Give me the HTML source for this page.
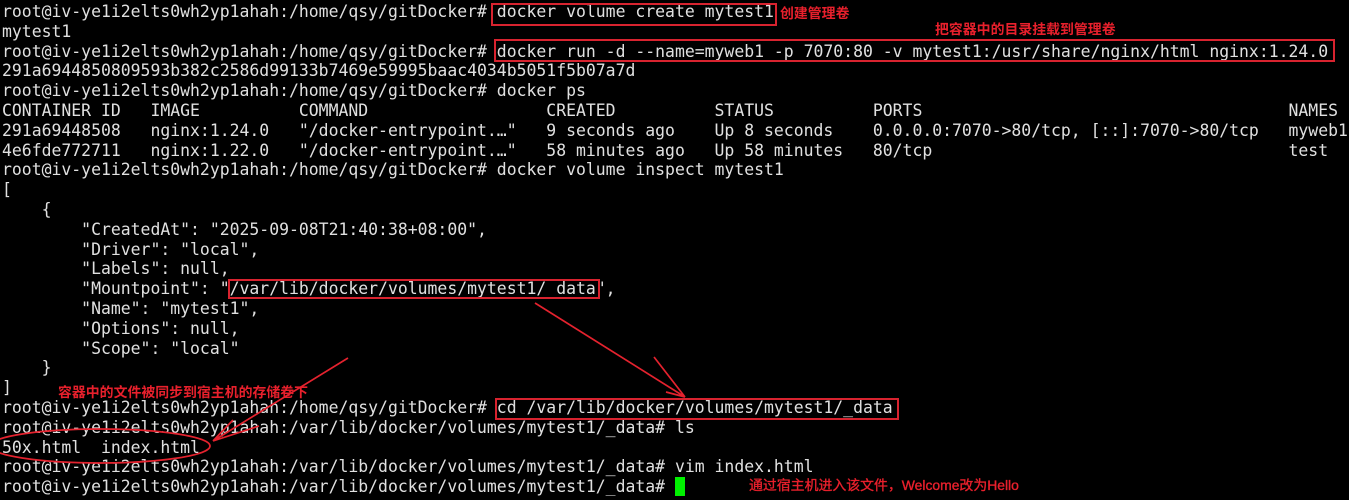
<!DOCTYPE html>
<html lang="zh">
<head>
<meta charset="utf-8">
<title>docker volume</title>
<style>
html,body{margin:0;padding:0;width:1349px;height:500px;overflow:hidden;background:#000;}
pre{position:absolute;left:2px;top:2px;margin:0;font-family:"DejaVu Sans Mono","Liberation Mono",monospace;font-size:16.45px;line-height:19.79px;color:#e0e0e0;filter:blur(.3px);white-space:pre;}
.box{position:absolute;border:2px solid #d8232f;box-sizing:border-box;}
.note{position:absolute;font-family:"Liberation Sans","Noto Sans CJK SC",sans-serif;font-size:13.9px;line-height:16px;color:#e8202c;font-weight:700;white-space:nowrap;filter:blur(.2px);}
#cursor{position:absolute;left:675px;top:477px;width:10px;height:19px;background:#00f000;}
svg{position:absolute;left:0;top:0;}
</style>
</head>
<body>
<pre>root@iv-ye1i2elts0wh2yp1ahah:/home/qsy/gitDocker# docker volume create mytest1
mytest1
root@iv-ye1i2elts0wh2yp1ahah:/home/qsy/gitDocker# docker run -d --name=myweb1 -p 7070:80 -v mytest1:/usr/share/nginx/html nginx:1.24.0
291a6944850809593b382c2586d99133b7469e59995baac4034b5051f5b07a7d
root@iv-ye1i2elts0wh2yp1ahah:/home/qsy/gitDocker# docker ps
CONTAINER ID   IMAGE          COMMAND                  CREATED          STATUS          PORTS                                     NAMES
291a69448508   nginx:1.24.0   "/docker-entrypoint.…"   9 seconds ago    Up 8 seconds    0.0.0.0:7070-&gt;80/tcp, [::]:7070-&gt;80/tcp   myweb1
4e6fde772711   nginx:1.22.0   "/docker-entrypoint.…"   58 minutes ago   Up 58 minutes   80/tcp                                    test
root@iv-ye1i2elts0wh2yp1ahah:/home/qsy/gitDocker# docker volume inspect mytest1
[
    {
        "CreatedAt": "2025-09-08T21:40:38+08:00",
        "Driver": "local",
        "Labels": null,
        "Mountpoint": "/var/lib/docker/volumes/mytest1/_data",
        "Name": "mytest1",
        "Options": null,
        "Scope": "local"
    }
]
root@iv-ye1i2elts0wh2yp1ahah:/home/qsy/gitDocker# cd /var/lib/docker/volumes/mytest1/_data
root@iv-ye1i2elts0wh2yp1ahah:/var/lib/docker/volumes/mytest1/_data# ls
50x.html  index.html
root@iv-ye1i2elts0wh2yp1ahah:/var/lib/docker/volumes/mytest1/_data# vim index.html
root@iv-ye1i2elts0wh2yp1ahah:/var/lib/docker/volumes/mytest1/_data# </pre>
<div id="cursor"></div>
<div class="box" style="left:491px;top:3px;width:286px;height:23px;"></div>
<div class="box" style="left:494px;top:39px;width:841px;height:23px;"></div>
<div class="box" style="left:228px;top:279px;width:372px;height:20px;"></div>
<div class="box" style="left:495px;top:398px;width:404px;height:22px;"></div>
<div class="note" style="left:780px;top:5px;">创建管理卷</div>
<div class="note" style="left:935px;top:21px;">把容器中的目录挂载到管理卷</div>
<div class="note" style="left:58px;top:384px;">容器中的文件被同步到宿主机的存储卷下</div>
<div class="note" style="left:749px;top:477px;font-weight:400;-webkit-text-stroke:.35px #e8202c;">通过宿主机进入该文件，Welcome改为Hello</div>
<svg width="1349" height="500" viewBox="0 0 1349 500" fill="none" stroke="#e4222e" stroke-width="1.7">
<path d="M535 303L685 397M654 357L685 397M666 392L685 397"/>
<path d="M348 358L213 441M233 420L213 441M259 426L213 441"/>
<ellipse cx="100" cy="446" rx="110" ry="17"/>
</svg>
</body>
</html>
